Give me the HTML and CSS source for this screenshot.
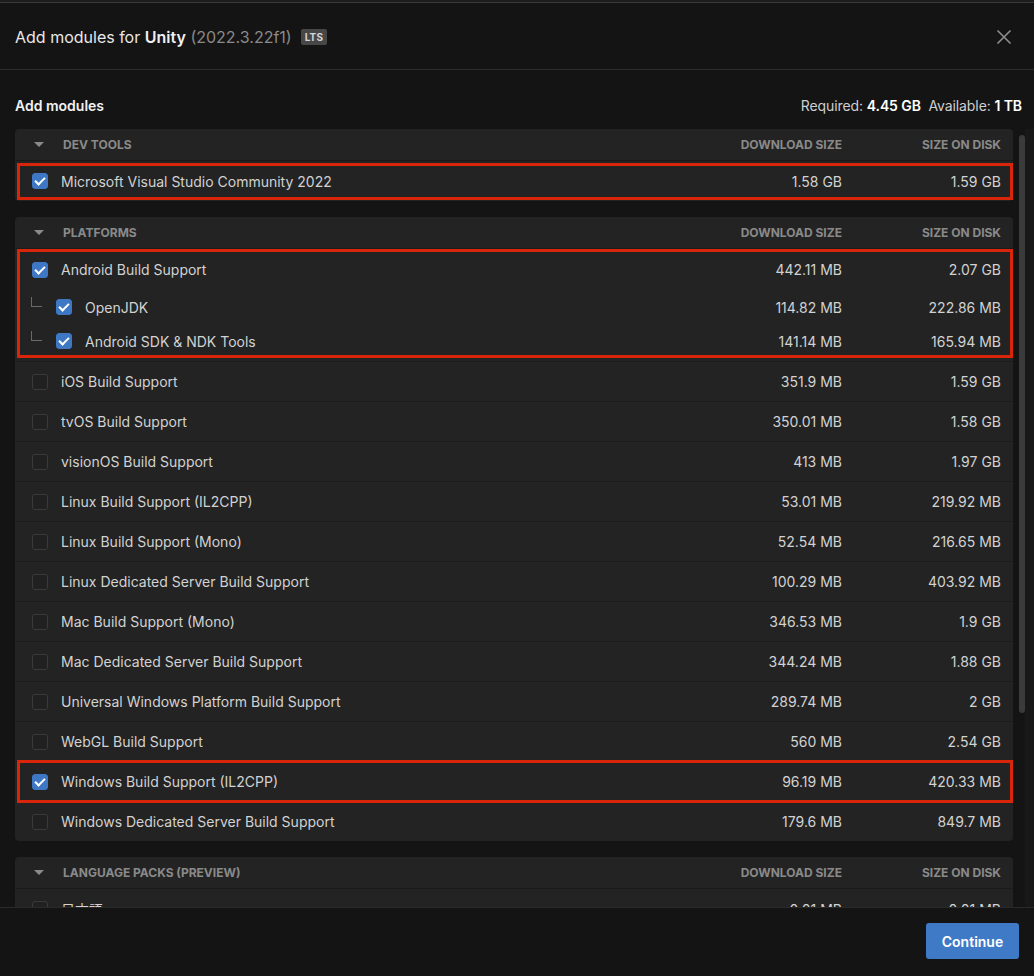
FILE: index.html
```html
<!DOCTYPE html>
<html lang="en">
<head>
<meta charset="utf-8">
<title>Add modules</title>
<link rel="stylesheet" href="styles.css">
</head>
<body>
<div class="window">
  <div class="topstrip"></div>
  <header class="titlebar">
    <h1 class="title">Add modules for <span class="strong">Unity</span> <span class="ver">(2022.3.22f1)</span></h1>
    <span class="badge">LTS</span>
    <span class="spacer"></span>
    <svg class="close" width="16" height="16" viewBox="0 0 16 16"><path d="M1.5 1.5 L14.5 14.5 M14.5 1.5 L1.5 14.5" stroke="#8f8f8f" stroke-width="1.6" fill="none"/></svg>
  </header>
  <div class="subhead">
    <span class="subtitle">Add modules</span>
    <span class="space">Required: <b>4.45 GB</b>&nbsp;&nbsp;Available: <b>1 TB</b></span>
  </div>
  <div class="scroller">
    <div class="content">
      <section class="card">
        <div class="row head">
          <span class="name"><i class="tri"></i>DEV TOOLS</span>
          <span class="num">DOWNLOAD SIZE</span>
          <span class="num">SIZE ON DISK</span>
        </div>
        <div class="row item hl hl-one">
          <span class="name"><i class="cb on"></i>Microsoft Visual Studio Community 2022</span>
          <span class="num">1.58 GB</span>
          <span class="num">1.59 GB</span>
        </div>
      </section>

      <section class="card">
        <div class="row head">
          <span class="name"><i class="tri"></i>PLATFORMS</span>
          <span class="num">DOWNLOAD SIZE</span>
          <span class="num">SIZE ON DISK</span>
        </div>
        <div class="group hl hl-group">
          <div class="row item">
            <span class="name"><i class="cb on"></i>Android Build Support</span>
            <span class="num">442.11 MB</span>
            <span class="num">2.07 GB</span>
          </div>
          <div class="row item sub">
            <span class="name"><i class="tree"></i><i class="cb on"></i>OpenJDK</span>
            <span class="num">114.82 MB</span>
            <span class="num">222.86 MB</span>
          </div>
          <div class="row item sub">
            <span class="name"><i class="tree"></i><i class="cb on"></i>Android SDK &amp; NDK Tools</span>
            <span class="num">141.14 MB</span>
            <span class="num">165.94 MB</span>
          </div>
        </div>
        <div class="row item"><span class="name"><i class="cb"></i>iOS Build Support</span><span class="num">351.9 MB</span><span class="num">1.59 GB</span></div>
        <div class="row item"><span class="name"><i class="cb"></i>tvOS Build Support</span><span class="num">350.01 MB</span><span class="num">1.58 GB</span></div>
        <div class="row item"><span class="name"><i class="cb"></i>visionOS Build Support</span><span class="num">413 MB</span><span class="num">1.97 GB</span></div>
        <div class="row item"><span class="name"><i class="cb"></i>Linux Build Support (IL2CPP)</span><span class="num">53.01 MB</span><span class="num">219.92 MB</span></div>
        <div class="row item"><span class="name"><i class="cb"></i>Linux Build Support (Mono)</span><span class="num">52.54 MB</span><span class="num">216.65 MB</span></div>
        <div class="row item"><span class="name"><i class="cb"></i>Linux Dedicated Server Build Support</span><span class="num">100.29 MB</span><span class="num">403.92 MB</span></div>
        <div class="row item"><span class="name"><i class="cb"></i>Mac Build Support (Mono)</span><span class="num">346.53 MB</span><span class="num">1.9 GB</span></div>
        <div class="row item"><span class="name"><i class="cb"></i>Mac Dedicated Server Build Support</span><span class="num">344.24 MB</span><span class="num">1.88 GB</span></div>
        <div class="row item"><span class="name"><i class="cb"></i>Universal Windows Platform Build Support</span><span class="num">289.74 MB</span><span class="num">2 GB</span></div>
        <div class="row item"><span class="name"><i class="cb"></i>WebGL Build Support</span><span class="num">560 MB</span><span class="num">2.54 GB</span></div>
        <div class="row item hl hl-row"><span class="name"><i class="cb on"></i>Windows Build Support (IL2CPP)</span><span class="num">96.19 MB</span><span class="num">420.33 MB</span></div>
        <div class="row item"><span class="name"><i class="cb"></i>Windows Dedicated Server Build Support</span><span class="num">179.6 MB</span><span class="num">849.7 MB</span></div>
      </section>

      <section class="card">
        <div class="row head">
          <span class="name"><i class="tri"></i>LANGUAGE PACKS (PREVIEW)</span>
          <span class="num">DOWNLOAD SIZE</span>
          <span class="num">SIZE ON DISK</span>
        </div>
        <div class="row item"><span class="name"><i class="cb"></i>日本語</span><span class="num">0.01 MB</span><span class="num">0.01 MB</span></div>
      </section>
    </div>
    <div class="scrollbar"><div class="thumb"></div></div>
  </div>
  <footer class="footer">
    <button class="btn">Continue</button>
  </footer>
</div>
</body>
</html>
```

FILE: styles.css
```css
* { box-sizing: border-box; }
html, body { margin: 0; padding: 0; background: #141414; }
body {
  font-family: Inter, "Noto Sans CJK JP", "Liberation Sans", sans-serif;
  color: #d4d4d4;
  width: 1034px;
  height: 976px;
  overflow: hidden;
}
.window { display: flex; flex-direction: column; height: 976px; }
.topstrip { height: 3px; background: #1c1c1c; border-bottom: 1px solid #3a3a3a; flex: none; }
.titlebar {
  height: 67px; flex: none;
  display: flex; align-items: center;
  padding: 2px 22px 0 15px;
  border-bottom: 1px solid #2c2c2c;
}
.title { margin: 0; font-size: 16px; font-weight: 400; color: #e8e8e8; letter-spacing: 0; }
.title .strong { font-weight: 600; color: #f0f0f0; }
.title .ver { color: #8a8a8a; }
.badge {
  margin-left: 9px;
  background: #474747; color: #d6d6d6;
  font-size: 10px; font-weight: 700; letter-spacing: 0.2px;
  padding: 2px 4px; border-radius: 2px; line-height: 12px;
}
.spacer { flex: 1; }
.close { display: block; }
.subhead {
  flex: none; height: 59px;
  display: flex; align-items: flex-start; justify-content: space-between;
  padding: 27px 12px 0 15px;
  font-size: 14px; line-height: 17px;
}
.subtitle { font-weight: 600; color: #f2f2f2; }
.space { color: #cfcfcf; letter-spacing: -0.1px; }
.space b { color: #ffffff; font-weight: 600; }

.scroller { flex: 1; display: flex; overflow: hidden; min-height: 0; }
.content { flex: 1; overflow: hidden; padding-left: 15px; display: flex; flex-direction: column; gap: 16px; }
.scrollbar { width: 21px; flex: none; padding: 6px 9px 0 6px; background: linear-gradient(to right, #141414 12px, #181818 12px); }
.thumb { height: 578px; width: 6px; border-radius: 3px; background: #3b3b3b; }

.card { background: #232323; border-radius: 4px; flex: none; }
.row {
  display: grid;
  grid-template-columns: 1fr 200px 159px;
  align-items: center;
  padding: 0 12px 0 17px;
  position: relative;
}
.row .num { text-align: right; }
.row .name { display: flex; align-items: center; }
.head {
  height: 32px;
  font-size: 12px; font-weight: 700; color: #8a8a8a;
  border-bottom: 1px solid #1a1a1a;
}
.tri {
  width: 0; height: 0; margin: 0 19px 0 2px;
  border-left: 5px solid transparent; border-right: 5px solid transparent;
  border-top: 5px solid #8a8a8a;
}
.item {
  height: 40px;
  font-size: 14px; color: #d2d2d2;
  border-top: 1px solid #1b1b1b;
}
.head + .item { border-top: 0; }
.group .item { border-top: 0; }
.group { position: relative; padding-bottom: 3px; }
.group .item:first-child { height: 41px; }
.group .item.sub { height: 34px; }
.cb {
  width: 16px; height: 16px; border-radius: 3px; flex: none;
  border: 1px solid #3a3a3a; background: #212121;
  margin-right: 13px;
  position: relative;
}
.cb.on { background: #3e78c5; border-color: #3e78c5; }
.cb.on::after {
  content: ""; position: absolute;
  left: 4px; top: 1px; width: 4px; height: 8px;
  border: solid #ffffff; border-width: 0 2px 2px 0;
  transform: rotate(45deg);
}
.tree {
  width: 11px; height: 10px; flex: none;
  border-left: 1px solid #6a6a6a; border-bottom: 1px solid #6a6a6a;
  margin: 0 14px 0 -1px;
  transform: translateY(-5px);
}
.hl::after {
  content: ""; position: absolute; pointer-events: none;
  border: 3px solid #d9260b;
}
.hl-one::after { left: 2px; right: 0; top: 2px; bottom: 1px; }
.hl-group::after { left: 2px; right: 0; top: 0; bottom: 3px; }
.hl-row::after { left: 2px; right: 0; top: -2px; bottom: -2px; z-index: 2; }

.footer {
  flex: none; height: 69px;
  border-top: 1px solid #2a2a2a;
  background: #141414;
  display: flex; align-items: flex-start; justify-content: flex-end;
  padding: 15px 15px 0 0;
}
.btn {
  font-family: Inter, "Liberation Sans", sans-serif;
  background: #3f7ac7; color: #ffffff;
  border: 0; border-radius: 3px;
  height: 36px; width: 93px;
  font-size: 14px; font-weight: 600;
}
```
